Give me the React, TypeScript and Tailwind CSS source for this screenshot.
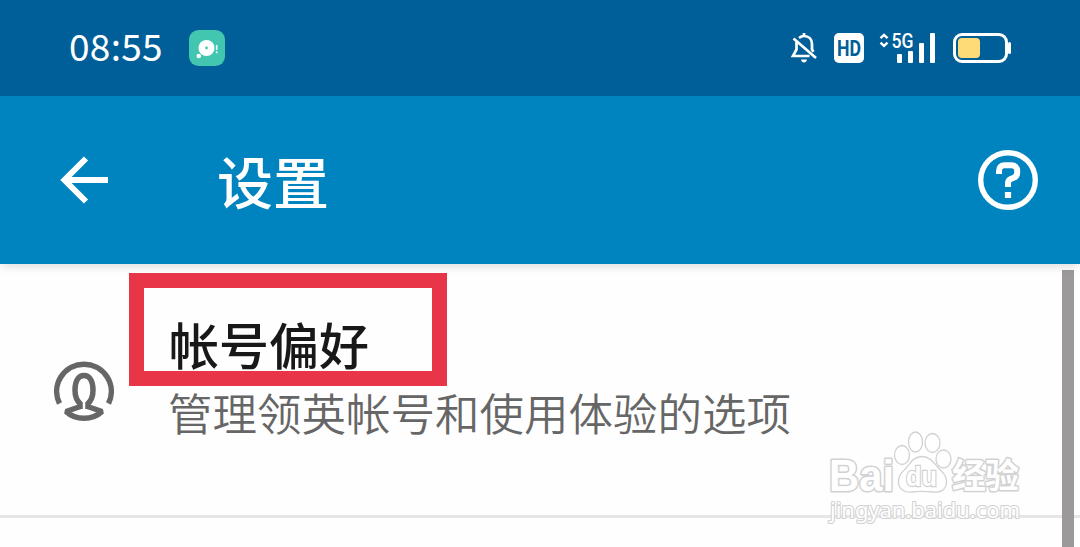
import type { ReactNode } from "react";

const CJK = "font-['Noto_Sans_CJK_SC',sans-serif]";

function AppBadge() {
  return (
    <svg width="36" height="36" viewBox="0 0 36 36" className="shrink-0">
      <rect width="36" height="36" rx="9.5" fill="#43c6b0" />
      <circle cx="17.5" cy="18" r="8" fill="#fff" />
      <circle cx="17.5" cy="18" r="1.4" fill="#43c6b0" />
      <circle cx="9.8" cy="26" r="2.3" fill="#fff" />
      <path d="M27.7 15v5M27.7 21.3v2" stroke="#e4fffa" strokeWidth="1.6" />
    </svg>
  );
}

function MutedBell() {
  return (
    <svg width="28" height="32" viewBox="0 0 28 32" fill="none" stroke="#fff" strokeWidth="2.7">
      <path d="M14 1v3M9 5.900C10.400 4.700 12 4 14 4c4.800 0 8 3.300 8 8v5.500l1.500 2.200M6.500 10V17.500L3 24H19.500" />
      <path d="M3.500 6.500L26 26" />
      <path d="M11 27.500h6c-.3 2-1.500 3-3 3s-2.700-1-3-3z" fill="#fff" stroke="none" />
    </svg>
  );
}

function HdBadge() {
  return (
    <span className="flex h-[30px] w-[30px] items-center justify-center rounded-[5px] bg-white">
      <svg width="30" height="30" viewBox="0 0 30 30" className="overflow-visible">
        <text
          x="15"
          y="22.800"
          textAnchor="middle"
          textLength="24"
          lengthAdjust="spacingAndGlyphs"
          className="fill-[#005f98] font-['Roboto',sans-serif] text-[22px] font-bold"
        >
          HD
        </text>
      </svg>
    </span>
  );
}

function Signal() {
  return (
    <svg width="58" height="32" viewBox="0 0 58 32" className="overflow-visible">
      <path d="M1.500 6.200L5 2.900l3.500 3.300M1.500 10.600L5 13.900l3.500-3.300" fill="none" stroke="#fff" strokeWidth="2.400" />
      <text
        x="12.500"
        y="15.500"
        textLength="22"
        lengthAdjust="spacingAndGlyphs"
        className="fill-white font-['Roboto',sans-serif] text-[20px] font-medium"
      >
        5G
      </text>
      <g fill="#fff">
        <rect x="18" y="22" width="5" height="9" rx="1" />
        <rect x="29" y="19" width="5" height="12" rx="1" />
        <rect x="40" y="11" width="5" height="20" rx="1" />
        <rect x="51" y="1" width="5" height="30" rx="1" />
      </g>
    </svg>
  );
}

function Battery() {
  return (
    <svg width="60" height="32" viewBox="0 0 60 32">
      <rect x="1.500" y="2.500" width="52" height="27" rx="7.500" fill="none" stroke="#fff" strokeWidth="3" />
      <rect x="5" y="6" width="22" height="20" rx="4" fill="#fedb76" />
      <rect x="55" y="10" width="3" height="12" rx="1.500" fill="#fff" />
    </svg>
  );
}

function StatusBar() {
  return (
    <div className="flex h-24 items-center bg-[#005f98] pr-[67px] pl-[69px]">
      <span className={`${CJK} w-[120px] pb-[5px] text-[37px] leading-none font-normal tracking-[0.300px] text-white`}>
        08:55
      </span>
      <AppBadge />
      <div className="ml-auto flex items-center">
        <MutedBell />
        <div className="ml-[16px]">
          <HdBadge />
        </div>
        <div className="ml-[15px]">
          <Signal />
        </div>
        <div className="ml-[16px]">
          <Battery />
        </div>
      </div>
    </div>
  );
}

function Header() {
  return (
    <header className="relative z-10 flex h-[168px] items-center bg-[#0084bf] pr-[42px] pl-[60px] shadow-[0_5px_8px_-2px_rgba(0,0,0,0.12)]">
      <svg width="48" height="48" viewBox="0 0 48 48" fill="none" stroke="#fff" strokeWidth="6">
        <path d="M26 2.500L4.500 24L26 45.500M4 24h44" />
      </svg>
      <h1 className={`${CJK} ml-[109px] pb-px text-[56px] leading-none font-medium text-white`}>设置</h1>
      <svg width="60" height="60" viewBox="0 0 60 60" fill="none" stroke="#fff" className="ml-auto">
        <circle cx="30" cy="30" r="27.300" strokeWidth="5.400" />
        <path d="M21 24V21c0-3.500 2-5.700 5.500-5.700h7c3.500 0 5.700 2.200 5.700 5.700v1.500c0 2.800-1 4.300-3.500 5.300l-3 1.200c-2 .9-2.700 2-2.700 4.200V37" strokeWidth="6" />
        <path d="M30 42v6" strokeWidth="6.200" />
      </svg>
    </header>
  );
}

function ProfileIcon() {
  return (
    <svg width="60" height="62" viewBox="0 0 60 62" fill="none" stroke="#666" strokeWidth="5.500">
      <path d="M5.500 43.500A27.300 27.300 0 1 1 54.500 43.500" />
      <path d="M26 49v-5.500c-3.300-3-5-7.800-5-13.300 0-9.200 3.300-14.700 9-14.700s9 5.500 9 14.700c0 5.500-1.700 10.300-5 13.300V49" />
      <path d="M26.500 46.500L12 51.500c5 4.700 11.500 6.800 18 6.800s13-2.100 18-6.800L33.500 46.500" strokeLinejoin="bevel" />
    </svg>
  );
}

function SettingRow({ icon, title, detail }: { icon: ReactNode; title: string; detail: string }) {
  return (
    <div className="flex h-[254px] items-center border-b-[3px] border-[#e6e6e6] pl-[54px]">
      <div className="shrink-0 pt-[3px]">{icon}</div>
      <div className={`${CJK} ml-[54px] pb-[26px] whitespace-nowrap`}>
        <div className="relative w-fit">
          <h2 className="pb-[2px] pl-px text-[50px] leading-[68px] font-medium text-[#181818]">{title}</h2>
          {/* highlight frame over the title */}
          <div className="absolute -top-[36px] -left-[39px] h-[113px] w-[318px] border-[15px] border-[#e93548]" />
        </div>
        <p className="text-[44.500px] leading-[66px] font-[350] text-[#666]">{detail}</p>
      </div>
    </div>
  );
}

function Watermark() {
  return (
    <svg
      width="210"
      height="110"
      viewBox="0 0 210 110"
      fill="#fff"
      stroke="#d2d2d2"
      strokeWidth="1.300"
      className="absolute top-[425px] left-[820px]"
    >
      <text
        x="9"
        y="66"
        fontSize="44"
        textLength="65"
        lengthAdjust="spacingAndGlyphs"
        strokeWidth="3.200"
        strokeLinejoin="round"
        paintOrder="stroke"
        className="font-['Liberation_Sans',sans-serif] font-bold"
      >
        Bai
      </text>
      <ellipse cx="82" cy="30" rx="7.500" ry="9.500" />
      <ellipse cx="95.500" cy="17" rx="7" ry="10" />
      <ellipse cx="112.500" cy="18" rx="7.500" ry="9.500" />
      <ellipse cx="123.500" cy="34" rx="7.500" ry="9" />
      <path d="M102 31.500c-8 0-11.500 6-15.500 11C82 47.500 78 50 78.500 57.500c.5 7 6 10 12.500 9.500 7-.8 15-.8 22 0 7.500.8 13-2 13.500-9.500.5-7-4-10-8.500-15-4-4.500-8-11-16-11z" />
      <text
        x="86"
        y="61"
        fontSize="27"
        textLength="31"
        lengthAdjust="spacingAndGlyphs"
        strokeWidth="2.400"
        paintOrder="stroke"
        className="font-['Liberation_Sans',sans-serif] font-bold"
      >
        du
      </text>
      <text
        x="132"
        y="63"
        fontSize="34"
        textLength="67"
        strokeWidth="3"
        strokeLinejoin="round"
        paintOrder="stroke"
        className="font-['Noto_Sans_CJK_SC',sans-serif] font-bold"
      >
        经验
      </text>
      <text
        x="10"
        y="93"
        fontSize="22"
        textLength="190"
        lengthAdjust="spacingAndGlyphs"
        strokeWidth="2.200"
        strokeLinejoin="round"
        paintOrder="stroke"
        className="font-['Noto_Sans',sans-serif]"
      >
        jingyan.baidu.com
      </text>
    </svg>
  );
}

export default function App() {
  return (
    <div className="relative h-[547px] w-[1080px] overflow-hidden bg-[#fefefe]">
      <StatusBar />
      <Header />
      <main>
        <SettingRow icon={<ProfileIcon />} title="帐号偏好" detail="管理领英帐号和使用体验的选项" />
      </main>
      {/* scrollbar */}
      <div className="absolute top-[270px] right-[6px] h-[277px] w-3 bg-[#9b9999]" />
      <Watermark />
    </div>
  );
}
